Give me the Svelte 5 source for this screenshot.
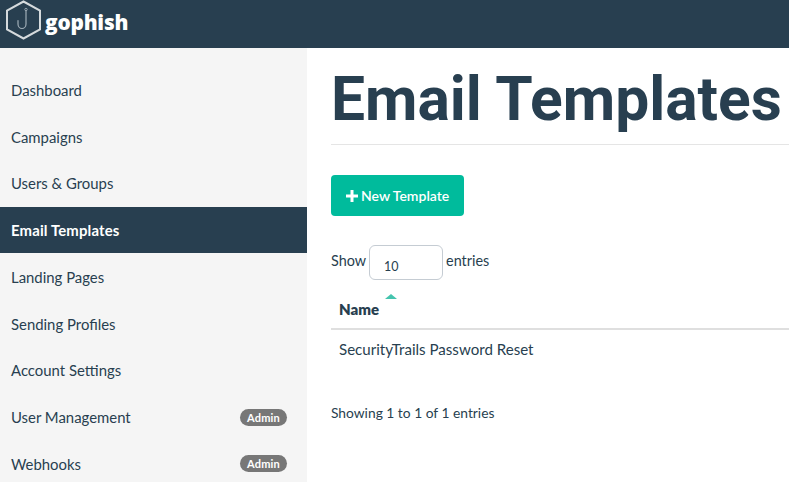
<script>
  const items = [
    { label: 'Dashboard' }, { label: 'Campaigns' }, { label: 'Users & Groups' },
    { label: 'Email Templates', active: true }, { label: 'Landing Pages' }, { label: 'Sending Profiles' },
    { label: 'Account Settings' }, { label: 'User Management', badge: 'Admin' }, { label: 'Webhooks', badge: 'Admin' }
  ];
</script>

<div class="page">
  <header class="topbar">
    <svg class="logo" width="38" height="40" viewBox="0 0 38 40" fill="none">
      <path d="M18.5 1.5 L35 10.5 V29.5 L18.5 38.5 L2 29.5 V10.5 Z" stroke="#d5dadd" stroke-width="2"/>
      <path d="M21 10.5 V24 a4 4.5 0 0 1 -8 0 V20.5" stroke="#9fadb7" stroke-width="1.2" stroke-linecap="round"/>
      <circle cx="21" cy="9.5" r="1.2" stroke="#9fadb7" stroke-width="0.9"/>
    </svg>
    <span class="brand">gophish</span>
  </header>
  <div class="body">
    <nav class="sidebar">
      {#each items as item}
        <div class="nav-item" class:active={item.active}>
          <span>{item.label}</span>
          {#if item.badge}<span class="badge">{item.badge}</span>{/if}
        </div>
      {/each}
    </nav>
    <main class="main">
      <h1>Email Templates</h1>
      <hr />
      <button class="new-btn"><svg class="plus" width="12" height="12" viewBox="0 0 12 12"><path d="M6 0v12M0 6h12" stroke="#fff" stroke-width="3"/></svg>New Template</button>
      <div class="length">
        <span>Show</span>
        <div class="select">10</div>
        <span>entries</span>
      </div>
      <div class="th"><span>Name</span><i class="caret"></i></div>
      <div class="td">SecurityTrails Password Reset</div>
      <div class="info">Showing 1 to 1 of 1 entries</div>
    </main>
  </div>
</div>

<style>
  :global(body) { margin: 0; background: #fff; overflow: hidden; }
  .page { width: 789px; height: 482px; overflow: hidden; font-family: "Lato", "Open Sans", sans-serif; color: #283f50; font-size: 14.4px; }
  .topbar { height: 48px; background: #283f50; display: flex; align-items: center; padding-left: 5px; gap: 2px; box-sizing: border-box; }
  .logo { flex: none; margin-top: -8px; }
  .brand { font-family: "Open Sans", sans-serif; font-weight: 800; font-size: 20.8px; color: #fff; letter-spacing: -0.2px; margin-top: -4px; }
  .body { display: flex; height: 434px; }
  .sidebar { width: 307px; flex: none; background: #f5f5f5; padding-top: 18.4px; box-sizing: border-box; }
  .nav-item { height: 46.75px; display: flex; align-items: center; justify-content: space-between; padding: 0 20px 0 11px; box-sizing: border-box; font-size: 14.9px; }
  .nav-item.active { background: #283f50; color: #fff; font-weight: 700; letter-spacing: 0.15px; }
  .badge { background: #777; color: #fff; font-size: 11px; font-weight: 700; line-height: 17px; height: 17px; padding: 0 7px; border-radius: 9px; letter-spacing: 0.2px; }
  .main { flex: 1; min-width: 0; padding-left: 24px; }
  h1 { margin: 17px 0 0; font-family: "Roboto", sans-serif; font-weight: 700; font-size: 60.5px; line-height: 70px; color: #283f50; white-space: nowrap; }
  hr { margin: 9px 0 0; border: 0; border-top: 1px solid #e5e5e5; }
  .new-btn { display: flex; align-items: center; gap: 3px; margin-top: 30px; width: 133px; height: 41px; padding: 0 0 0 15px; background: #00bb9c; color: #fff; border: 0; border-radius: 4px; font: 600 14px "Lato", sans-serif; }
  .length { display: flex; align-items: flex-start; gap: 3px; margin-top: 29px; height: 35px; line-height: 32px; }
  .select { width: 74px; height: 35px; box-sizing: border-box; border: 1px solid #c5ccd3; border-radius: 6px; font-size: 12.5px; padding: 13px 0 0 14px; line-height: 16px; background: #fff; }
  .th { position: relative; height: 50px; box-sizing: border-box; padding: 20px 0 0 8px; font-weight: 800; font-size: 15px; border-bottom: 2px solid #dfdfdf; line-height: 18px; }
  .caret { position: absolute; left: 54px; top: 14px; width: 0; height: 0; border: 6px solid transparent; border-top: 0; border-bottom: 5px solid #45c4ae; }
  .td { padding: 10px 0 0 8px; line-height: 18px; font-size: 15.1px; }
  .info { margin-top: 46px; line-height: 18px; font-size: 13.8px; }
</style>
